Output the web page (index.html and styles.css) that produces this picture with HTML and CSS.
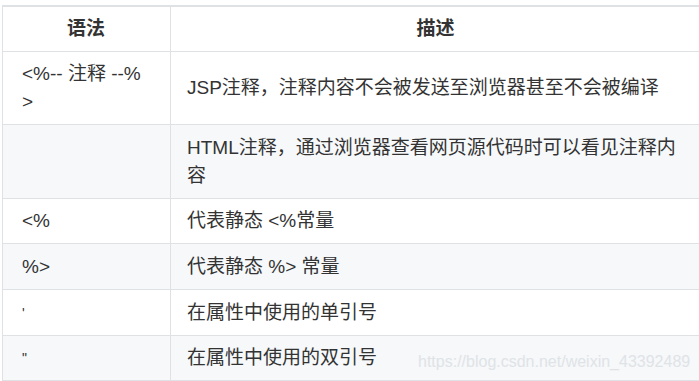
FILE: index.html
```html
<!DOCTYPE html>
<html lang="zh-CN">
<head>
<meta charset="utf-8">
<title>JSP 注释语法</title>
<link rel="stylesheet" href="styles.css">
</head>
<body>
<div class="wrap">
  <table class="md-table">
    <thead>
      <tr><th class="c1">语法</th><th>描述</th></tr>
    </thead>
    <tbody>
      <tr><td class="c1 brk">&lt;%-- 注释 --%&gt;</td><td>JSP注释，注释内容不会被发送至浏览器甚至不会被编译</td></tr>
      <tr class="tall"><td class="c1"></td><td>HTML注释，通过浏览器查看网页源代码时可以看见注释内容</td></tr>
      <tr><td class="c1">&lt;%</td><td>代表静态 &lt;%常量</td></tr>
      <tr class="mid"><td class="c1">%&gt;</td><td>代表静态 %&gt; 常量</td></tr>
      <tr class="mid"><td class="c1 small">'</td><td>在属性中使用的单引号</td></tr>
      <tr><td class="c1 small">"</td><td>在属性中使用的双引号</td></tr>
    </tbody>
  </table>
  <div class="watermark">https://blog.csdn.net/weixin_43392489</div>
</div>
</body>
</html>
```

FILE: styles.css
```css
html, body {
  margin: 0;
  padding: 0;
  background: #ffffff;
  overflow: hidden;
}
.wrap {
  position: relative;
  width: 699px;
  height: 381px;
  padding: 5px 0 0 2px;
  box-sizing: border-box;
  overflow: hidden;
}
.md-table {
  border-collapse: collapse;
  width: 699px;
  table-layout: fixed;
  font-family: "Liberation Sans", "Noto Sans CJK SC", sans-serif;
  font-size: 19px;
  line-height: 28px;
  color: #333333;
  border-top: 2px solid #dfe2e5;
  border-bottom: 2px solid #dfe2e5;
}
.md-table th,
.md-table td {
  border: 1px solid #dfe2e5;
  padding: 8px 16px;
  text-align: left;
  vertical-align: middle;
}
.md-table th {
  font-weight: bold;
  text-align: center;
  padding: 8px 16px;
  border-top: none;
}
.md-table .c1 {
  width: 120px;
  padding-left: 19px;
  padding-right: 28px;
}
.md-table th.c1 {
  padding-left: 23px;
  padding-right: 24px;
}
.md-table tbody tr:nth-child(2n) {
  background: #f6f8fa;
}
.md-table tr.tall td {
  padding-top: 9px;
}
.md-table tr.mid td {
  padding-top: 9px;
}
.brk {
  word-break: break-all;
}
.small {
  font-size: 14px;
}
.watermark {
  position: absolute;
  left: 418px;
  top: 350px;
  font-family: "Liberation Sans", sans-serif;
  font-size: 16px;
  line-height: 24px;
  color: #e0e3e6;
}
```
